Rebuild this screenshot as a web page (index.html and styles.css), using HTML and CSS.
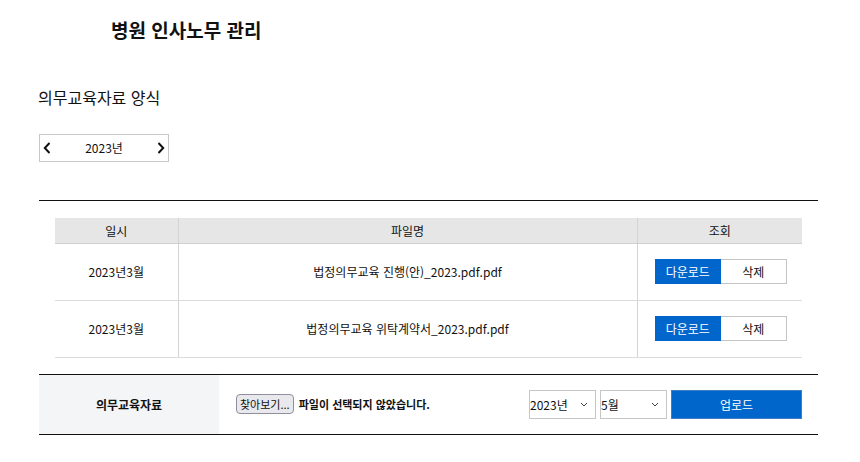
FILE: index.html
```html
<!DOCTYPE html>
<html lang="ko">
<head>
<meta charset="utf-8">
<title>병원 인사노무 관리</title>
<link rel="stylesheet" href="styles.css">
</head>
<body>
<header class="top">
  <h1 class="site-title">병원 인사노무 관리</h1>
</header>
<main class="content">
  <h2 class="page-title">의무교육자료 양식</h2>
  <div class="year-nav">
    <button class="nav-btn" type="button" aria-label="이전">
      <svg width="8" height="12" viewBox="0 0 8 12"><path d="M6.5 1 L1.8 6 L6.5 11" fill="none" stroke="#111" stroke-width="2"/></svg>
    </button>
    <span class="year-label">2023년</span>
    <button class="nav-btn" type="button" aria-label="다음">
      <svg width="8" height="12" viewBox="0 0 8 12"><path d="M1.5 1 L6.2 6 L1.5 11" fill="none" stroke="#111" stroke-width="2"/></svg>
    </button>
  </div>

  <section class="board">
    <table class="file-table">
      <thead>
        <tr><th class="col-date">일시</th><th class="col-name">파일명</th><th class="col-act">조회</th></tr>
      </thead>
      <tbody>
        <tr>
          <td>2023년3월</td>
          <td>법정의무교육 진행(안)_2023.pdf.pdf</td>
          <td><div class="btn-group"><button class="btn-down" type="button">다운로드</button><button class="btn-del" type="button">삭제</button></div></td>
        </tr>
        <tr>
          <td>2023년3월</td>
          <td>법정의무교육 위탁계약서_2023.pdf.pdf</td>
          <td><div class="btn-group"><button class="btn-down" type="button">다운로드</button><button class="btn-del" type="button">삭제</button></div></td>
        </tr>
      </tbody>
    </table>

    <form class="upload-row">
      <div class="upload-label">의무교육자료</div>
      <div class="upload-file">
        <span class="file-btn">찾아보기...</span>
        <span class="file-status">파일이 선택되지 않았습니다.</span>
      </div>
      <div class="upload-controls">
        <div class="fake-select"><span>2023년</span><svg width="8" height="5" viewBox="0 0 8 5"><path d="M1 1 L4 4 L7 1" fill="none" stroke="#444" stroke-width="1"/></svg></div>
        <div class="fake-select"><span>5월</span><svg width="8" height="5" viewBox="0 0 8 5"><path d="M1 1 L4 4 L7 1" fill="none" stroke="#444" stroke-width="1"/></svg></div>
        <button class="btn-upload" type="button">업로드</button>
      </div>
    </form>
  </section>
</main>
</body>
</html>
```

FILE: styles.css
```css
* { box-sizing: border-box; }

body {
  margin: 0;
  background: #fff;
  color: #111;
  font-family: "Noto Sans CJK KR", "Noto Sans", sans-serif;
}

button {
  font-family: inherit;
  cursor: pointer;
}

.top {
  padding: 18px 0 0 111px;
}

.site-title {
  margin: 0;
  font-size: 19px;
  line-height: 24px;
  font-weight: 700;
}

.content {
  padding: 0 42px 0 39px;
}

.page-title {
  margin: 44px 0 0 -1px;
  font-size: 16px;
  line-height: 22px;
  font-weight: 400;
}

.year-nav {
  margin-top: 26px;
  width: 130px;
  height: 28px;
  border: 1px solid #c8c8c8;
  display: flex;
  align-items: center;
  justify-content: space-between;
  padding: 0 1px;
}

.nav-btn {
  border: 0;
  background: none;
  padding: 0;
  width: 12px;
  height: 16px;
  display: flex;
  align-items: center;
  justify-content: center;
}

.year-label {
  font-size: 12px;
  line-height: 16px;
}

.board {
  margin-top: 38px;
  border-top: 1px solid #111;
  padding-top: 17px;
}

.file-table {
  margin: 0 16px;
  width: calc(100% - 32px);
  border-collapse: collapse;
  font-size: 12px;
}

.file-table th {
  background: #e6e6e6;
  font-weight: 400;
  height: 25px;
  padding: 0;
  border-bottom: 1px solid #cfcfcf;
  text-align: center;
}

.file-table td {
  height: 57px;
  padding: 0;
  text-align: center;
  border-bottom: 1px solid #dcdcdc;
}

.file-table th + th,
.file-table td + td {
  border-left: 1px solid #d4d4d4;
}

.col-date { width: 123px; }
.col-act { width: 165px; }

.btn-group {
  display: flex;
  justify-content: center;
  margin-left: 2px;
}

.btn-down,
.btn-del {
  width: 66px;
  height: 25px;
  font-size: 12px;
  padding: 0;
}

.btn-down {
  background: #0066cc;
  color: #fff;
  border: 1px solid #0066cc;
}

.btn-del {
  background: #fff;
  color: #111;
  border: 1px solid #c4c4c4;
  border-left: 0;
}

.upload-row {
  margin-top: 16px;
  border-top: 1px solid #111;
  border-bottom: 1px solid #111;
  height: 61px;
  display: flex;
  align-items: stretch;
}

.upload-label {
  width: 180px;
  background: #f4f5f7;
  display: flex;
  align-items: center;
  justify-content: center;
  font-size: 12px;
  font-weight: 700;
}

.upload-file {
  flex: 1;
  display: flex;
  align-items: center;
  padding-left: 17px;
  gap: 5px;
}

.file-btn {
  display: inline-block;
  font-size: 11px;
  line-height: 18px;
  padding: 0 3px;
  background: #e9e9ed;
  border: 1px solid #8f8f9d;
  border-radius: 4px;
  color: #111;
}

.file-status {
  font-size: 11px;
  font-weight: 700;
}

.upload-controls {
  display: flex;
  align-items: center;
  gap: 4px;
  padding-right: 16px;
}

.fake-select {
  width: 67px;
  height: 29px;
  border: 1px solid #c6c6c6;
  background: #fff;
  display: flex;
  align-items: center;
  justify-content: space-between;
  padding: 0 7px 0 0;
  font-size: 12px;
}

.btn-upload {
  width: 131px;
  height: 29px;
  background: #0066cc;
  color: #fff;
  border: 1px solid #3b7fc8;
  font-size: 12px;
  padding: 0;
}
```
